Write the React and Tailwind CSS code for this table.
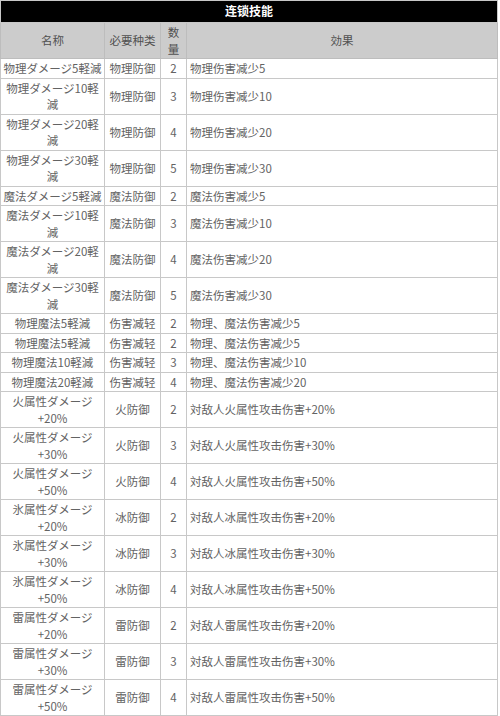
import React from "react";

const rows = [
  ["物理ダメージ5軽減", "物理防御", "2", "物理伤害减少5"],
  ["物理ダメージ10軽減", "物理防御", "3", "物理伤害减少10"],
  ["物理ダメージ20軽減", "物理防御", "4", "物理伤害减少20"],
  ["物理ダメージ30軽減", "物理防御", "5", "物理伤害减少30"],
  ["魔法ダメージ5軽減", "魔法防御", "2", "魔法伤害减少5"],
  ["魔法ダメージ10軽減", "魔法防御", "3", "魔法伤害减少10"],
  ["魔法ダメージ20軽減", "魔法防御", "4", "魔法伤害减少20"],
  ["魔法ダメージ30軽減", "魔法防御", "5", "魔法伤害减少30"],
  ["物理魔法5軽減", "伤害减轻", "2", "物理、魔法伤害减少5"],
  ["物理魔法5軽減", "伤害减轻", "2", "物理、魔法伤害减少5"],
  ["物理魔法10軽減", "伤害减轻", "3", "物理、魔法伤害减少10"],
  ["物理魔法20軽減", "伤害减轻", "4", "物理、魔法伤害减少20"],
  ["火属性ダメージ+20%", "火防御", "2", "対敌人火属性攻击伤害+20%"],
  ["火属性ダメージ+30%", "火防御", "3", "対敌人火属性攻击伤害+30%"],
  ["火属性ダメージ+50%", "火防御", "4", "対敌人火属性攻击伤害+50%"],
  ["氷属性ダメージ+20%", "冰防御", "2", "対敌人冰属性攻击伤害+20%"],
  ["氷属性ダメージ+30%", "冰防御", "3", "対敌人冰属性攻击伤害+30%"],
  ["氷属性ダメージ+50%", "冰防御", "4", "対敌人冰属性攻击伤害+50%"],
  ["雷属性ダメージ+20%", "雷防御", "2", "対敌人雷属性攻击伤害+20%"],
  ["雷属性ダメージ+30%", "雷防御", "3", "対敌人雷属性攻击伤害+30%"],
  ["雷属性ダメージ+50%", "雷防御", "4", "対敌人雷属性攻击伤害+50%"],
];

export default function App() {
  return (
    <div
      className="w-[500px] h-[716px] overflow-hidden bg-white"
      style={{ fontFamily: '"Noto Sans CJK SC", "Noto Sans CJK JP", "Noto Sans", sans-serif' }}
    >
      <table className="table-fixed border-collapse w-[498px] text-[11.5px] leading-[16.5px] text-[#636363]">
        <colgroup>
          <col className="w-[104px]" />
          <col className="w-[56px]" />
          <col className="w-[26px]" />
          <col />
        </colgroup>
        <thead>
          <tr>
            <th
              colSpan={4}
              className="h-[22px] bg-black text-white font-bold text-[12px] text-center border border-[#c8c8c8] p-0"
            >
              连锁技能
            </th>
          </tr>
          <tr className="bg-[#cccccc] text-[#505050]">
            <th className="font-normal border border-[#bdbdbd] px-[2px] py-px text-center">名称</th>
            <th className="font-normal border border-[#bdbdbd] px-[2px] py-px text-center">必要种类</th>
            <th className="font-normal border border-[#bdbdbd] px-[2px] py-px text-center">数量</th>
            <th className="font-normal border border-[#bdbdbd] px-[2px] py-px text-center">効果</th>
          </tr>
        </thead>
        <tbody>
          {rows.map((r, i) => (
            <tr key={i}>
              <td className="border border-[#c8c8c8] px-px py-px text-center">{r[0]}</td>
              <td className="border border-[#c8c8c8] px-[2px] py-px text-center">{r[1]}</td>
              <td className="border border-[#c8c8c8] px-[2px] py-px text-center">{r[2]}</td>
              <td className="border border-[#c8c8c8] pl-[3px] pr-[2px] py-px text-left">{r[3]}</td>
            </tr>
          ))}
        </tbody>
      </table>
    </div>
  );
}
